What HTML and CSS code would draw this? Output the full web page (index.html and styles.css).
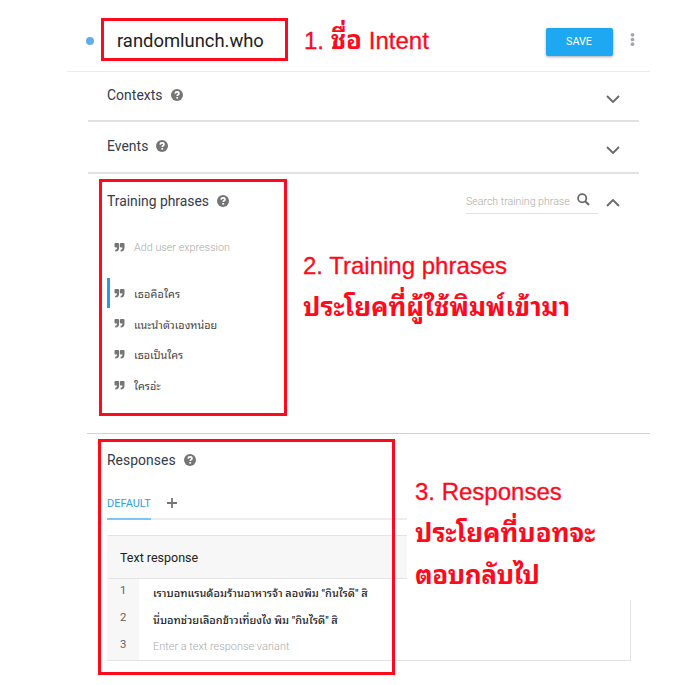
FILE: index.html
```html
<!DOCTYPE html>
<html lang="th">
<head>
<meta charset="utf-8">
<title>randomlunch.who</title>
<link rel="stylesheet" href="styles.css">
</head>
<body>
<svg class="defs" aria-hidden="true">
  <symbol id="help" viewBox="0 0 12 12"><circle cx="6" cy="6" r="6" fill="#757575"/><path d="M4.1 4.6Q4.3 2.9 6.1 2.9Q7.9 2.9 7.9 4.4Q7.9 5.2 7 5.8Q6.2 6.3 6.2 7.1" fill="none" stroke="#fff" stroke-width="1.7"/><rect x="5.3" y="8" width="1.8" height="1.6" fill="#fff"/></symbol>
  <symbol id="quote" viewBox="0 0 10 9"><path d="M1 0H3.5Q4.6 0 4.6 1V4.5Q4.6 8.5 1 8.5H.7V6.8H1Q2.5 6.8 2.5 5V4.5H1Q0 4.5 0 3.5V1Q0 0 1 0ZM6.4 0H8.9Q10 0 10 1V4.5Q10 8.5 6.4 8.5H6.1V6.8H6.4Q7.9 6.8 7.9 5V4.5H6.4Q5.4 4.5 5.4 3.5V1Q5.4 0 6.4 0Z" fill="#757575"/></symbol>
  <symbol id="chevron" viewBox="0 0 14 8"><path d="M1 1L7 7L13 1" fill="none" stroke="#6b6b6b" stroke-width="1.9"/></symbol>
</svg>
<main class="page">
  <header class="header">
    <span class="dot"></span>
    <h1 class="name">randomlunch.who</h1>
    <button class="save">SAVE</button>
    <svg class="more" viewBox="0 0 4 12"><g fill="#a2a5ac"><circle cx="2" cy="1.7" r="1.7"/><circle cx="2" cy="6" r="1.7"/><circle cx="2" cy="10.3" r="1.7"/></g></svg>
  </header>
  <section class="section contexts">
    <h2>Contexts</h2><svg class="help"><use href="#help"/></svg><svg class="chevron"><use href="#chevron"/></svg>
  </section>
  <section class="section events">
    <h2>Events</h2><svg class="help"><use href="#help"/></svg><svg class="chevron"><use href="#chevron"/></svg>
  </section>
  <section class="training">
    <div class="title-row">
      <h2>Training phrases</h2><svg class="help"><use href="#help"/></svg>
      <div class="search"><span class="hint">Search training phrase</span><svg class="glass" viewBox="0 0 13 13"><circle cx="5.2" cy="5.2" r="4.1" fill="none" stroke="#6b6b6b" stroke-width="1.8"/><path d="M8.2 8.2L12 12" stroke="#6b6b6b" stroke-width="2.1"/></svg></div>
      <svg class="chevron up"><use href="#chevron"/></svg>
    </div>
    <div class="phrase add"><svg class="quote"><use href="#quote"/></svg><span>Add user expression</span></div>
    <div class="phrase active"><svg class="quote"><use href="#quote"/></svg><span class="p1">เธอคือใคร</span></div>
    <div class="phrase"><svg class="quote"><use href="#quote"/></svg><span class="p2">แนะนำตัวเองหน่อย</span></div>
    <div class="phrase"><svg class="quote"><use href="#quote"/></svg><span class="p3">เธอเป็นใคร</span></div>
    <div class="phrase"><svg class="quote"><use href="#quote"/></svg><span class="p4">ใครอ่ะ</span></div>
  </section>
  <section class="responses">
    <div class="title-row"><h2>Responses</h2><svg class="help"><use href="#help"/></svg></div>
    <div class="tabs"><span class="tab">DEFAULT</span><svg class="plus" viewBox="0 0 10 10"><path d="M5 0V10M0 5H10" stroke="#757575" stroke-width="1.8"/></svg></div>
    <div class="panel">
      <h3>Text response</h3>
      <div class="row"><span class="num">1</span><span class="text r1">เราบอทแรนด้อมร้านอาหารจ้า ลองพิม "กินไรดี" สิ</span></div>
      <div class="row"><span class="num">2</span><span class="text r2">นี่บอทช่วยเลือกข้าวเที่ยงไง พิม "กินไรดี" สิ</span></div>
      <div class="row"><span class="num">3</span><span class="text empty">Enter a text response variant</span></div>
    </div>
  </section>
  <div class="frame frame-name"></div>
  <div class="frame frame-training"></div>
  <div class="note note-name">1. <b>ชื่อ</b> Intent</div>
  <div class="note note-training">2. Training phrases<br><b class="t1">ประโยคที่ผู้ใช้พิมพ์เข้ามา</b></div>
  <div class="note note-responses">3. Responses<br><b class="t2">ประโยคที่บอทจะ</b><br><b class="t3">ตอบกลับไป</b></div>
  <div class="frame frame-responses"></div>
</main>
</body>
</html>
```
FILE: styles.css
```css
* { box-sizing: border-box; }
body { margin: 0; background: #fff; font-family: Roboto, "Noto Sans Thai Looped", "Noto Looped Thai", Loma, Garuda, Waree, "Noto Serif Thai", sans-serif; }
h1, h2, h3 { margin: 0; font-weight: 400; }
.defs { position: absolute; width: 0; height: 0; }
.page { position: relative; width: 700px; height: 685px; overflow: hidden; }
.header { display: flex; align-items: center; height: 72px; margin: 0 50px 0 67px; padding: 11px 15px 0 19px; border-bottom: 1px solid #ebebeb; }
.dot { width: 8px; height: 8px; border-radius: 50%; background: #64aee8; }
.name { margin-left: 23px; font-size: 18.4px; line-height: 24px; color: #212121; white-space: nowrap; }
.save { width: 67px; height: 28px; margin: 1px 0 0 auto; padding: 0 1px 0 0; border: 0; border-radius: 2px; background: #1ea8f2; color: #fff; font: 10.8px Roboto, sans-serif; box-shadow: 0 1px 3px rgba(0,0,0,.35); }
.more { width: 5px; height: 13px; margin: -4px 0 0 17px; }
h2 { font-size: 13.9px; line-height: 20px; letter-spacing: .05px; color: #343b4c; white-space: nowrap; }
.training h2 { letter-spacing: -.02px; }
.help { width: 12px; height: 12px; margin-left: 8px; flex: none; }
.chevron { width: 14px; height: 8px; margin: 7px 0 0 auto; }
.up { transform: rotate(180deg); }
.section { display: flex; align-items: center; margin: 0 61px 0 88px; padding: 0 19px 2px 19px; border-bottom: 2px solid #e3e0e1; }
.contexts { height: 50px; }
.events { height: 52px; }
.training { height: 260px; margin: 0 50px 0 87px; padding-top: 17px; border-bottom: 1px solid #d2d2d2; }
.title-row { display: flex; align-items: center; height: 20px; padding-left: 20px; }
.training .title-row { padding-right: 30px; }
.search { display: flex; align-items: center; width: 132px; height: 25px; margin-left: auto; border-bottom: 1px solid #e2e2e2; }
.hint { width: 106px; overflow: hidden; font-size: 10.6px; font-weight: 300; color: #aaa; white-space: nowrap; padding-top: 2px; }
.glass { width: 13px; height: 13px; margin: -3px 0 0 5px; }
.training .title-row .chevron { margin: 3px 0 0 8px; }
.phrase { display: flex; align-items: center; height: 30.7px; padding-left: 27px; font-size: 10.8px; color: #444; white-space: nowrap; }
.phrase.add { margin: 21px 0 15px; color: #aaa; font-weight: 300; }
.phrase.active { margin-left: 20px; padding-left: 4px; border-left: 3px solid #3498db; }
.p1 { letter-spacing: .15px; }
.quote { width: 11px; height: 9px; margin-right: 9px; }
.responses { padding: 16px 0 0 87px; }
.tabs { display: flex; align-items: center; width: 524px; height: 33px; margin: 17px 0 0 20px; border-bottom: 2px solid #ededed; }
.tab { align-self: stretch; width: 44px; height: 33px; border-bottom: 2px solid #7fc4f2; font-size: 11px; line-height: 34px; color: #2ca2e0; }
.plus { width: 10px; height: 10px; margin-left: 16px; }
.panel { width: 524px; height: 126px; margin: 15px 0 0 20px; border: 1px solid #e4e4e4; border-left-color: #f7f7f7; }
h3 { height: 43px; padding-left: 12px; background: #f7f7f7; border-bottom: 1px solid #e4e4e4; font-size: 12.5px; line-height: 43px; color: #212121; }
.row { display: flex; height: 27px; align-items: center; }
.num { align-self: stretch; width: 31px; padding-left: 12px; background: #f7f7f7; font-size: 11.3px; line-height: 23px; color: #616161; }
.text { margin-left: 14px; padding-bottom: 2px; font-size: 10.95px; font-weight: 500; color: #212121; white-space: nowrap; }
.empty { padding: 0; color: #aaa; font-weight: 300; }
.frame { position: absolute; border: 3px solid #ff0a1c; }
.frame-name { left: 101px; top: 18px; width: 187px; height: 43px; }
.frame-training { left: 99px; top: 179px; width: 188px; height: 237px; }
.frame-responses { left: 98px; top: 439px; width: 297px; height: 236px; }
.note { position: absolute; color: #ff0a1c; font: 24px/42px "Liberation Sans", "Noto Sans Thai Looped", "Noto Looped Thai", Loma, Garuda, Waree, "Noto Serif Thai", sans-serif; -webkit-text-stroke: .3px #ff0a1c; white-space: nowrap; }
.note b { -webkit-text-stroke: 0; font-size: 26px; line-height: 40px; }
.t3 { letter-spacing: -.4px; }
.note-name { left: 304px; top: 20px; }
.note-training { left: 303px; top: 245px; }
.note-responses { left: 407px; top: 471px; width: 236px; height: 129px; padding-left: 8px; background: #fff; }
```
